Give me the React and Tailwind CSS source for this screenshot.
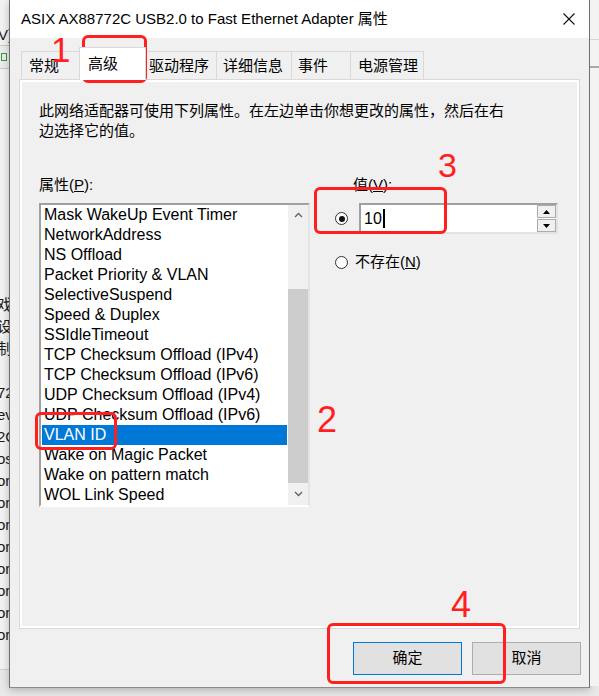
import React from 'react';

const items = [
  'Mask WakeUp Event Timer', 'NetworkAddress', 'NS Offload', 'Packet Priority & VLAN',
  'SelectiveSuspend', 'Speed & Duplex', 'SSIdleTimeout', 'TCP Checksum Offload (IPv4)',
  'TCP Checksum Offload (IPv6)', 'UDP Checksum Offload (IPv4)', 'UDP Checksum Offload (IPv6)',
  'VLAN ID', 'Wake on Magic Packet', 'Wake on pattern match', 'WOL Link Speed',
];

const tabs = [
  { label: '常规', w: 'w-[59px]', pl: 'pl-[7px]' },
  { label: '高级', w: 'w-[67px]', pl: 'pl-[8px]', active: true },
  { label: '驱动程序', w: 'w-[72px]', pl: 'pl-[3px]' },
  { label: '详细信息', w: 'w-[76px]', pl: 'pl-[6px]' },
  { label: '事件', w: 'w-[60px]', pl: 'pl-[6px]' },
  { label: '电源管理', w: 'w-[74px]', pl: 'pl-[7px]' },
];

const behind = ['戏', '设', '制', '', '72', 'ev', '2C', 'os', 'or', 'or', 'or', 'or', 'or', 'or', 'or', 'or'];

const Chevron = ({ up }) => (
  <svg width="9" height="6" viewBox="0 0 9 6">
    <polyline points={up ? '1,5 4.5,1.5 8,5' : '1,1 4.5,4.5 8,1'} fill="none" stroke="#606060" strokeWidth="1.3" />
  </svg>
);

const Tri = ({ up }) => (
  <svg width="7" height="4" viewBox="0 0 7 4">
    <polygon points={up ? '0,4 3.5,0 7,4' : '0,0 3.5,4 7,0'} fill="#000" />
  </svg>
);

const Radio = ({ on }) => (
  <div className="w-[13px] h-[13px] rounded-full border border-[#333] bg-white flex items-center justify-center">
    {on && <div className="w-[6px] h-[6px] rounded-full bg-[#111]" />}
  </div>
);

export default function App() {
  return (
    <div className="relative w-[599px] h-[696px] overflow-hidden bg-[#e9e9e9] flex items-start font-['Liberation_Sans','Noto_Sans_CJK_SC',sans-serif] text-black">
      {/* window behind, left */}
      <div className="w-[9px] h-[670px] bg-[#f3f3f3] overflow-hidden border-b border-[#cfcfcf] text-[15px] text-[#1a1a1a]">
        <div className="pt-[25px] h-[45px] leading-[20px] -ml-[2px]">V)</div>
        <div className="h-[24px] border-y border-[#c8c8c8] bg-[#ececec] flex items-center">
          <div className="w-[6px] h-[8px] border border-[#3a9a3a] ml-[1px]" />
        </div>
        <div className="h-[225px]" />
        {behind.map((t, i) => (
          <div key={i} className="h-[22px] leading-[22px] -ml-[3px] whitespace-nowrap">{t}</div>
        ))}
      </div>

      {/* dialog */}
      <div className="w-[581px] h-[688px] bg-[#f0f0f0] border-x border-b border-x-[#6f6f6f] border-b-[#8a8a8a] shadow-[0_2px_8px_rgba(0,0,0,0.25)] flex flex-col">
        <div className="h-[38px] bg-white flex items-center justify-between pl-[11px] pr-[14px]">
          <span className="text-[15px]">ASIX AX88772C USB2.0 to Fast Ethernet Adapter 属性</span>
          <svg width="12" height="12" viewBox="0 0 12 12">
            <path d="M0.5 0.5 L11.5 11.5 M11.5 0.5 L0.5 11.5" stroke="#111" strokeWidth="1.1" />
          </svg>
        </div>

        {/* tabs */}
        <div className="h-[42px] flex items-end pl-[11px]">
          {tabs.map((t) => (
            <div
              key={t.label}
              className={`${t.w} ${t.pl} text-[15px] border-t border-x border-[#d9d9d9] -ml-px first:ml-0 flex ${
                t.active ? 'h-[33px] bg-white items-start pt-[5px] relative z-10 border-b-0' : 'h-[29px] bg-[#f0f0f0] items-center'
              }`}
            >
              {t.label}
            </div>
          ))}
        </div>

        {/* tab page */}
        <div className="ml-[9px] w-[561px] h-[550px] border border-[#d9d9d9] -mt-px">
          <div className="h-full border-2 border-white bg-[#f0f0f0] pl-[17px] pt-[19px] text-[15px]">
            <div className="leading-[20px]">
              <div>此网络适配器可使用下列属性。在左边单击你想更改的属性，然后在右</div>
              <div>边选择它的值。</div>
            </div>

            <div className="flex mt-[34px]">
              {/* left column */}
              <div className="w-[271px]">
                <div className="leading-[20px]">属性(<span className="underline">P</span>):</div>
                <div className="mt-[8px] h-[304px] border-2 border-t-[#a0a0a0] border-l-[#a0a0a0] border-b-white border-r-[#e3e3e3] bg-white flex">
                  <div className="flex-1 pl-px pr-px">
                    {items.map((it) => (
                      <div
                        key={it}
                        className={`h-[20px] leading-[20px] pl-[2px] text-[16px] whitespace-nowrap ${
                          it === 'VLAN ID' ? 'bg-[#0078d7] text-white' : ''
                        }`}
                      >
                        {it}
                      </div>
                    ))}
                  </div>
                  <div className="w-[20px] bg-[#f0f0f0] flex flex-col">
                    <div className="h-[20px] flex items-center justify-center"><Chevron up /></div>
                    <div className="h-[64px]" />
                    <div className="h-[194px] bg-[#cdcdcd]" />
                    <div className="flex-1 flex items-center justify-center"><Chevron /></div>
                  </div>
                </div>
              </div>

              {/* right column */}
              <div className="ml-[25px]">
                <div className="leading-[20px] pl-[18px]">值(<span className="underline">V</span>):</div>
                <div className="mt-[8px] flex items-center">
                  <Radio on />
                  <div className="ml-[11px] w-[199px] h-[31px] bg-white border-2 border-t-[#a0a0a0] border-l-[#a0a0a0] border-b-[#e3e3e3] border-r-[#e3e3e3] flex">
                    <div className="flex-1 flex items-center pl-[3px] text-[16px]">
                      10<span className="w-[2px] h-[19px] bg-black ml-px" />
                    </div>
                    <div className="w-[19px] flex flex-col gap-px">
                      <div className="flex-1 border border-[#adadad] bg-[#f0f0f0] flex items-center justify-center"><Tri up /></div>
                      <div className="flex-1 border border-[#adadad] bg-[#f0f0f0] flex items-center justify-center"><Tri /></div>
                    </div>
                  </div>
                </div>
                <div className="mt-[18px] h-[20px] flex items-center">
                  <Radio />
                  <span className="ml-[7px] leading-[20px]">不存在(<span className="underline">N</span>)</span>
                </div>
              </div>
            </div>
          </div>
        </div>

        {/* buttons */}
        <div className="mt-[13px] flex justify-end gap-[10px] pr-[8px] text-[15px]">
          <div className="w-[109px] h-[33px] bg-[#e1e1e1] border border-[#0078d7] flex items-center justify-center">确定</div>
          <div className="w-[109px] h-[33px] bg-[#e1e1e1] border border-[#adadad] flex items-center justify-center">取消</div>
        </div>
      </div>

      {/* window behind, right */}
      <div className="flex-1 h-[686px] bg-[#f3f3f3] flex flex-col">
        <div className="h-[40px] border-b border-[#d6d6d6]" />
        <div className="h-[28px] border-b-2 border-[#a8a8a8]" />
      </div>

      {/* annotations */}
      <div className="absolute left-[82px] top-[35px] w-[65px] h-[48px] border-[3px] border-[#ff1f1f] rounded-[6px]" />
      <div className="absolute left-[51px] top-[32px] text-[35px] leading-none text-[#ff1f1f]">1</div>

      <div className="absolute left-[35px] top-[412px] w-[82px] h-[38px] border-[3px] border-[#ff1f1f] rounded-[6px]" />
      <div className="absolute left-[317px] top-[402px] text-[36px] leading-none text-[#ff1f1f]">2</div>

      <div className="absolute left-[314px] top-[187px] w-[133px] h-[47px] border-[3px] border-[#ff1f1f] rounded-[6px]" />
      <div className="absolute left-[438px] top-[148px] text-[34px] leading-none text-[#ff1f1f]">3</div>

      <div className="absolute left-[327px] top-[623px] w-[179px] h-[61px] border-[3px] border-[#ff1f1f] rounded-[6px]" />
      <div className="absolute left-[451px] top-[587px] text-[36px] leading-none text-[#ff1f1f]">4</div>
    </div>
  );
}
